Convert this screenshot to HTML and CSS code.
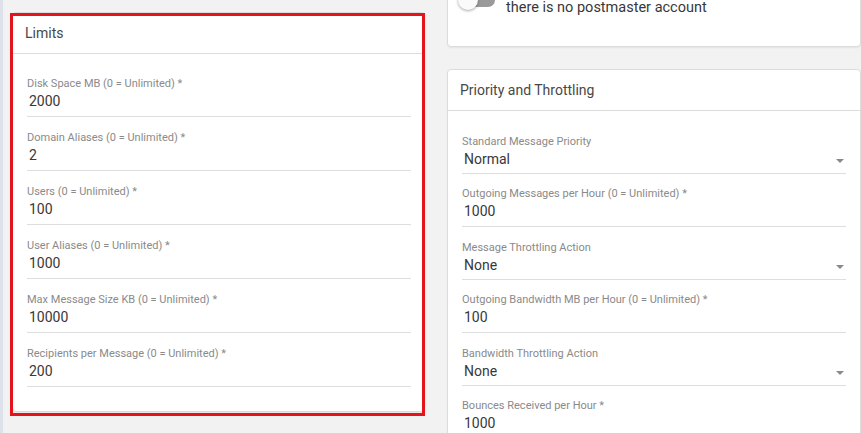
FILE: index.html
```html
<!DOCTYPE html>
<html lang="en">
<head>
<meta charset="utf-8">
<title>Domain Settings</title>
<link rel="stylesheet" href="styles.css">
</head>
<body>
<div class="page">
  <div class="strip"></div>
  <div class="content">
    <div class="col">
      <section class="card limits">
        <div class="annot"></div>
        <header class="card-head">Limits</header>
        <div class="card-body">
          <div class="field"><div class="label">Disk Space MB (0 = Unlimited) *</div><div class="value">2000</div></div>
          <div class="field"><div class="label">Domain Aliases (0 = Unlimited) *</div><div class="value">2</div></div>
          <div class="field"><div class="label">Users (0 = Unlimited) *</div><div class="value">100</div></div>
          <div class="field"><div class="label">User Aliases (0 = Unlimited) *</div><div class="value">1000</div></div>
          <div class="field"><div class="label">Max Message Size KB (0 = Unlimited) *</div><div class="value">10000</div></div>
          <div class="field"><div class="label">Recipients per Message (0 = Unlimited) *</div><div class="value">200</div></div>
        </div>
      </section>
    </div>
    <div class="col right">
      <section class="card toggle-card">
        <div class="toggle-row">
          <span class="switch"><span class="track"></span><span class="thumb"></span></span>
          <span class="toggle-text">there is no postmaster account</span>
        </div>
      </section>
      <section class="card">
        <header class="card-head">Priority and Throttling</header>
        <div class="card-body tight">
          <div class="field select"><div class="label">Standard Message Priority</div><div class="value"><span>Normal</span><span class="arrow"></span></div></div>
          <div class="field"><div class="label">Outgoing Messages per Hour (0 = Unlimited) *</div><div class="value">1000</div></div>
          <div class="field select"><div class="label">Message Throttling Action</div><div class="value"><span>None</span><span class="arrow"></span></div></div>
          <div class="field"><div class="label">Outgoing Bandwidth MB per Hour (0 = Unlimited) *</div><div class="value">100</div></div>
          <div class="field select"><div class="label">Bandwidth Throttling Action</div><div class="value"><span>None</span><span class="arrow"></span></div></div>
          <div class="field"><div class="label">Bounces Received per Hour *</div><div class="value">1000</div></div>
        </div>
      </section>
    </div>
  </div>
</div>
</body>
</html>
```

FILE: styles.css
```css
html, body {
  margin: 0;
  padding: 0;
  height: 433px;
  overflow: hidden;
  background: #f2f2f2;
  font-family: Roboto, "Liberation Sans", Arial, sans-serif;
}

.page {
  display: flex;
  height: 433px;
}

.strip {
  width: 3px;
  flex: 0 0 3px;
  background: #dce1ea;
}

.content {
  display: grid;
  grid-template-columns: 413px 414px;
  column-gap: 22px;
  padding: 12px 0 0 9px;
  align-items: start;
}

.col {
  display: flex;
  flex-direction: column;
  gap: 22px;
}

.col.right {
  margin-top: -62px;
}

.card {
  position: relative;
  background: #fff;
  border: 1px solid #dcdcdc;
  border-radius: 4px;
  box-shadow: 0 1px 2px rgba(0, 0, 0, 0.06);
}

.annot {
  position: absolute;
  left: -3px;
  top: 0;
  width: 415px;
  height: 403px;
  box-sizing: border-box;
  border: 3px solid #e5131b;
  pointer-events: none;
}

.card-head {
  height: 40px;
  line-height: 40px;
  padding: 0 12px;
  font-size: 14px;
  color: #484848;
  border-bottom: 1px solid #dcdcdc;
}

.card-body {
  padding: 9px 13px 24px 14px;
}

.card-body.tight {
  padding: 10px 14px 24px 14px;
}

.field {
  padding: 14px 0 5px;
  border-bottom: 1px solid #dedede;
}

.tight .field {
  padding: 13px 0 5px;
}

.tight .field.select {
  padding: 14px 0 4px;
}

.label {
  font-size: 11px;
  line-height: 14px;
  color: #8a8a8a;
  white-space: nowrap;
}

.value {
  font-size: 14px;
  line-height: 20px;
  color: #383838;
  padding-left: 2px;
}

.select .value {
  display: flex;
  justify-content: space-between;
  align-items: center;
}

.arrow {
  width: 0;
  height: 0;
  margin: 3px 2px 0 0;
  border-left: 4px solid transparent;
  border-right: 4px solid transparent;
  border-top: 4px solid #8a8a8a;
}

.toggle-card {
  padding: 47px 14px 28px 10px;
}

.toggle-row {
  display: flex;
  align-items: flex-start;
  gap: 11px;
}

.switch {
  position: relative;
  width: 37px;
  height: 20px;
  flex: 0 0 37px;
  margin-top: -8px;
}

.track {
  position: absolute;
  left: 3px;
  top: 3px;
  width: 34px;
  height: 14px;
  border-radius: 7px;
  background: #9a9a9a;
}

.thumb {
  position: absolute;
  left: 0;
  top: 0;
  width: 20px;
  height: 20px;
  border-radius: 50%;
  background: #fafafa;
  box-shadow: 0 1px 3px rgba(0, 0, 0, 0.35);
}

.toggle-text {
  font-size: 14.5px;
  line-height: 20px;
  color: #383838;
}
```
